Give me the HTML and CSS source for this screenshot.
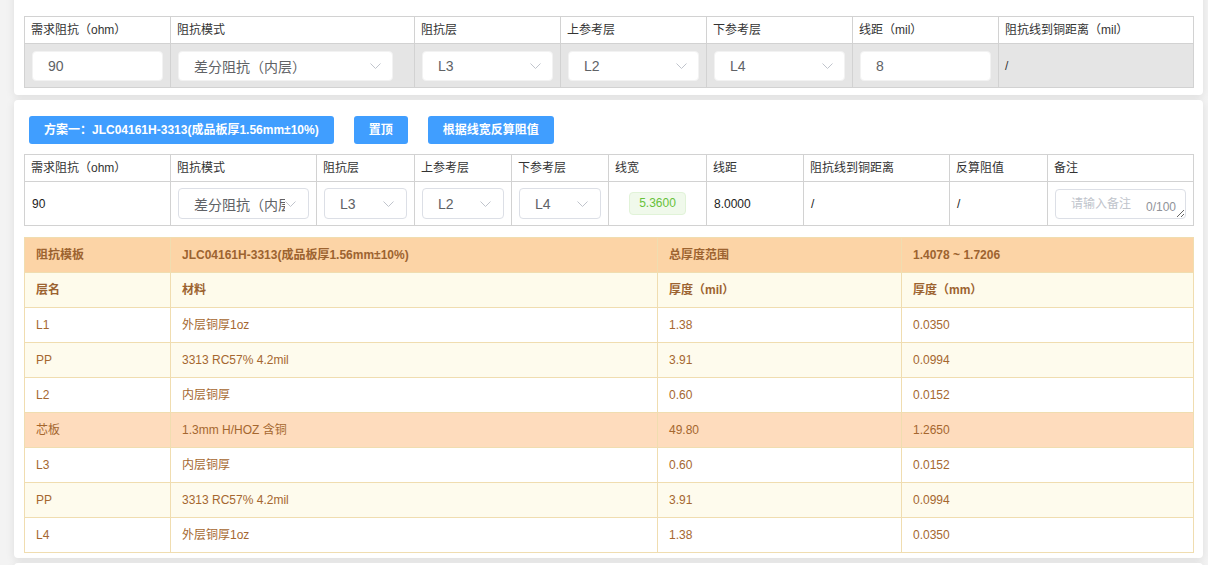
FILE: index.html
```html
<!DOCTYPE html>
<html lang="zh-CN">
<head>
<meta charset="utf-8">
<title>阻抗计算</title>
<link rel="stylesheet" href="styles.css">
</head>
<body>
<div class="page">
  <section class="card card-top">
    <table class="grid req">
      <colgroup>
        <col class="w146"><col class="w244"><col class="w146"><col class="w146"><col class="w146"><col class="w146"><col class="w195">
      </colgroup>
      <thead>
        <tr><th>需求阻抗（ohm）</th><th>阻抗模式</th><th>阻抗层</th><th>上参考层</th><th>下参考层</th><th>线距（mil）</th><th>阻抗线到铜距离（mil）</th></tr>
      </thead>
      <tbody>
        <tr>
          <td><div class="input">90</div></td>
          <td><div class="input select wide"><span class="val">差分阻抗（内层）</span><svg class="arrow" viewBox="0 0 11 6" width="11" height="6"><path d="M0.5 0.5l5 5 5-5" fill="none" stroke="#c0c4cc" stroke-width="1"/></svg></div></td>
          <td><div class="input select"><span class="val">L3</span><svg class="arrow" viewBox="0 0 11 6" width="11" height="6"><path d="M0.5 0.5l5 5 5-5" fill="none" stroke="#c0c4cc" stroke-width="1"/></svg></div></td>
          <td><div class="input select"><span class="val">L2</span><svg class="arrow" viewBox="0 0 11 6" width="11" height="6"><path d="M0.5 0.5l5 5 5-5" fill="none" stroke="#c0c4cc" stroke-width="1"/></svg></div></td>
          <td><div class="input select"><span class="val">L4</span><svg class="arrow" viewBox="0 0 11 6" width="11" height="6"><path d="M0.5 0.5l5 5 5-5" fill="none" stroke="#c0c4cc" stroke-width="1"/></svg></div></td>
          <td><div class="input">8</div></td>
          <td class="plain">/</td>
        </tr>
      </tbody>
    </table>
  </section>

  <section class="card card-plan">
    <div class="actions">
      <button class="btn">方案一：JLC04161H-3313(成品板厚1.56mm±10%)</button>
      <button class="btn">置顶</button>
      <button class="btn">根据线宽反算阻值</button>
    </div>
    <table class="grid plan">
      <colgroup>
        <col class="w146"><col class="w146"><col class="w98"><col class="w97"><col class="w97"><col class="w98"><col class="w97"><col class="w146"><col class="w98"><col class="w146">
      </colgroup>
      <thead>
        <tr><th>需求阻抗（ohm）</th><th>阻抗模式</th><th>阻抗层</th><th>上参考层</th><th>下参考层</th><th>线宽</th><th>线距</th><th>阻抗线到铜距离</th><th>反算阻值</th><th>备注</th></tr>
      </thead>
      <tbody>
        <tr>
          <td class="txt">90</td>
          <td><div class="box select"><span class="val">差分阻抗（内层）</span><svg class="arrow" viewBox="0 0 11 6" width="11" height="6"><path d="M0.5 0.5l5 5 5-5" fill="none" stroke="#c0c4cc" stroke-width="1"/></svg></div></td>
          <td><div class="box select"><span class="val">L3</span><svg class="arrow" viewBox="0 0 11 6" width="11" height="6"><path d="M0.5 0.5l5 5 5-5" fill="none" stroke="#c0c4cc" stroke-width="1"/></svg></div></td>
          <td><div class="box select"><span class="val">L2</span><svg class="arrow" viewBox="0 0 11 6" width="11" height="6"><path d="M0.5 0.5l5 5 5-5" fill="none" stroke="#c0c4cc" stroke-width="1"/></svg></div></td>
          <td><div class="box select"><span class="val">L4</span><svg class="arrow" viewBox="0 0 11 6" width="11" height="6"><path d="M0.5 0.5l5 5 5-5" fill="none" stroke="#c0c4cc" stroke-width="1"/></svg></div></td>
          <td class="center"><span class="tag">5.3600</span></td>
          <td class="txt">8.0000</td>
          <td class="txt">/</td>
          <td class="txt">/</td>
          <td><div class="remark"><textarea class="textarea" placeholder="请输入备注"></textarea><span class="count">0/100</span></div></td>
        </tr>
      </tbody>
    </table>

    <table class="stack">
      <colgroup><col class="w146"><col class="w487"><col class="w244"><col class="w292"></colgroup>
      <thead>
        <tr class="head1"><th>阻抗模板</th><th>JLC04161H-3313(成品板厚1.56mm±10%)</th><th>总厚度范围</th><th>1.4078 ~ 1.7206</th></tr>
        <tr class="head2"><th>层名</th><th>材料</th><th>厚度（mil）</th><th>厚度（mm）</th></tr>
      </thead>
      <tbody>
        <tr class="cu"><td>L1</td><td>外层铜厚1oz</td><td>1.38</td><td>0.0350</td></tr>
        <tr class="pp"><td>PP</td><td>3313 RC57% 4.2mil</td><td>3.91</td><td>0.0994</td></tr>
        <tr class="cu"><td>L2</td><td>内层铜厚</td><td>0.60</td><td>0.0152</td></tr>
        <tr class="core"><td>芯板</td><td>1.3mm H/HOZ 含铜</td><td>49.80</td><td>1.2650</td></tr>
        <tr class="cu"><td>L3</td><td>内层铜厚</td><td>0.60</td><td>0.0152</td></tr>
        <tr class="pp"><td>PP</td><td>3313 RC57% 4.2mil</td><td>3.91</td><td>0.0994</td></tr>
        <tr class="cu"><td>L4</td><td>外层铜厚1oz</td><td>1.38</td><td>0.0350</td></tr>
      </tbody>
    </table>
  </section>

  <section class="card card-next"></section>
</div>
</body>
</html>
```

FILE: styles.css
```css
html, body {
  margin: 0;
  padding: 0;
}
body {
  background: #f3f3f3;
  font-family: "Liberation Sans", "Noto Sans CJK SC", sans-serif;
  font-size: 12px;
  color: #333;
  overflow: hidden;
}
.page {
  padding: 0 5px 0 14px;
}
.card {
  background: #fff;
  border-radius: 4px;
  box-shadow: 0 2px 10px rgba(0, 0, 0, 0.09);
}
.card-top {
  margin-top: -10px;
  padding: 26px 10px 7px;
}
.card-plan {
  margin-top: 5px;
  padding: 16px 10px 5px;
}
.card-next {
  margin-top: 5px;
  height: 40px;
}

table {
  width: 100%;
  border-collapse: collapse;
  table-layout: fixed;
}
.w146 { width: 146px; }
.w244 { width: 244px; }
.w195 { width: 195px; }
.w98 { width: 98px; }
.w97 { width: 97px; }
.w487 { width: 487px; }
.w292 { width: 292px; }

.grid th,
.grid td {
  border: 1px solid #d2d2d2;
  text-align: left;
  font-weight: normal;
  white-space: nowrap;
  overflow: hidden;
}
.grid th {
  height: 26px;
  padding: 0 6px;
  color: #333;
  line-height: 16px;
}
.grid td {
  height: 43px;
  padding: 0 7px;
}

.req td {
  background: #e5e5e5;
  padding: 0 7px 0 7px;
}
.req td.plain {
  color: #333;
  padding-left: 6px;
}

.input {
  box-sizing: border-box;
  height: 30px;
  border-radius: 4px;
  background: #fff;
  border: 1px solid #f2f2f2;
  padding: 0 0 0 15px;
  font-size: 14px;
  color: #606266;
  display: flex;
  align-items: center;
}
.select {
  padding-right: 11px;
}
.select .val {
  flex: 1;
  min-width: 0;
  overflow: hidden;
  white-space: nowrap;
}
.select .arrow {
  flex: none;
  display: block;
}
.input.wide {
  width: 215px;
}

.plan td.txt {
  color: #222;
}
.plan td.center {
  text-align: center;
}
.box {
  box-sizing: border-box;
  height: 31px;
  border-radius: 4px;
  background: #fff;
  border: 1px solid #dcdfe6;
  padding: 0 12px 0 15px;
  font-size: 14px;
  color: #606266;
  display: flex;
  align-items: center;
}
.tag {
  display: inline-block;
  box-sizing: border-box;
  height: 23px;
  line-height: 21px;
  padding: 0 9px;
  border: 1px solid #e1f3d8;
  background: #f0f9eb;
  color: #67c23a;
  border-radius: 4px;
  font-size: 12px;
}
.remark {
  position: relative;
}
.textarea {
  display: block;
  box-sizing: border-box;
  width: 100%;
  height: 30px;
  border: 1px solid #dcdfe6;
  border-radius: 4px;
  padding: 5px 15px;
  font-family: inherit;
  font-size: 12px;
  line-height: 18px;
  color: #606266;
  resize: vertical;
  outline: none;
  margin: 0;
}
.textarea::placeholder {
  color: #c0c4cc;
}
.count {
  position: absolute;
  right: 10px;
  bottom: 5px;
  line-height: 14px;
  font-size: 12px;
  color: #909399;
  background: #fff;
}

.actions {
  display: flex;
  gap: 20px;
  margin: 0 0 10px 5px;
}
.btn {
  height: 28px;
  padding: 0 15px;
  border: 0;
  border-radius: 3px;
  background: #409eff;
  color: #fff;
  font-family: inherit;
  font-size: 12px;
  font-weight: bold;
  line-height: 28px;
  white-space: nowrap;
  cursor: pointer;
}

.stack {
  margin-top: 11px;
  color: #a5672f;
}
.stack th,
.stack td {
  border: 1px solid #f0ddb0;
  height: 34px;
  padding: 0 11px;
  text-align: left;
  white-space: nowrap;
  line-height: 16px;
}
.stack th {
  font-weight: bold;
  color: #9c6330;
}
.stack td {
  font-weight: normal;
}
.head1 th {
  background: #fcd4a6;
}
.head2 th {
  background: #fefbeb;
}
.cu td {
  background: #fff;
}
.pp td {
  background: #fefbed;
}
.core td {
  background: #fedcbd;
}
```
